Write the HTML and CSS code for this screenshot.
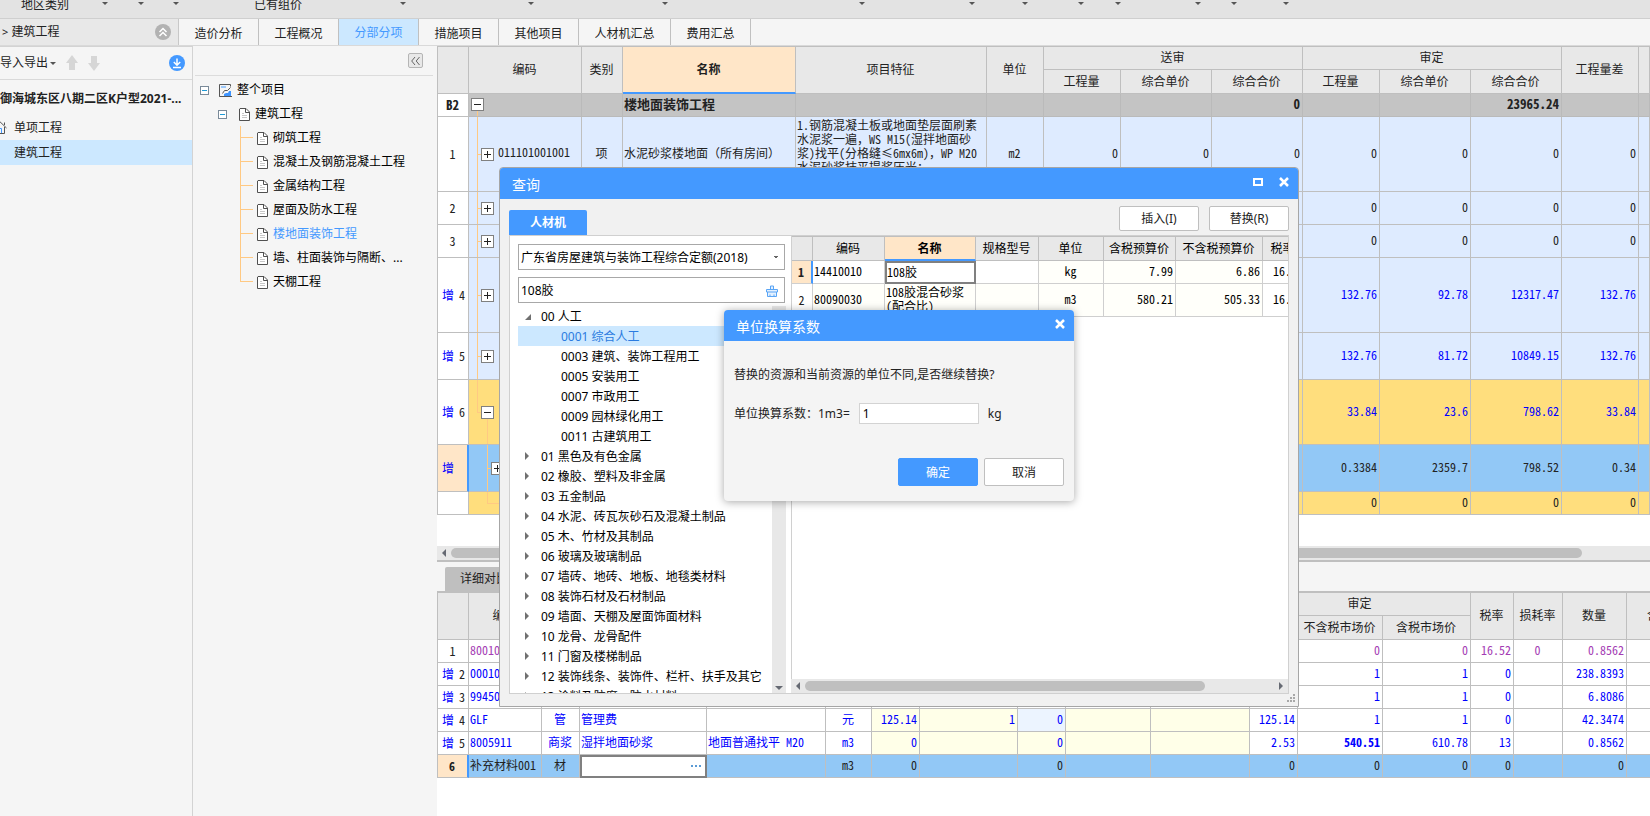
FILE: index.html
```html
<!DOCTYPE html>
<html lang="zh-CN">
<head>
<meta charset="utf-8">
<title>分部分项</title>
<link rel="stylesheet" href="styles.css">
</head>
<body>
<svg class="defs" aria-hidden="true">
  <symbol id="doc" viewBox="0 0 11 13"><path d="M1 .5h6L10.500 4v8.500H.5V1z" fill="#fff" stroke="#505050"/><path d="M6.500 1v3.500H10" fill="none" stroke="#505050"/><path d="M3 5.500h2M3 7.500h5M3 9.500h5" stroke="#c8c8c8"/></symbol>
  <symbol id="cross" viewBox="0 0 10 10"><path d="M1 1l8 8M9 1L1 9" stroke="#fff" stroke-width="2.500" fill="none"/></symbol>
</svg>

<header class="ribbon">
  <div class="rb rb-first"><span>地区类别</span><i class="caret"></i></div>
  <div class="rb"><i class="caret"></i></div>
  <div class="rb"><i class="caret"></i></div>
  <div class="rb rb-price"><span>已有组价</span><i class="caret"></i></div>
  <div class="rb"><i class="caret"></i></div>
  <div class="rb"><i class="caret"></i></div>
  <div class="rb"><i class="caret"></i></div>
  <div class="rb"><i class="caret"></i></div>
  <div class="rb"><i class="caret"></i></div>
  <div class="rb"><i class="caret"></i></div>
  <div class="rb"><i class="caret"></i></div>
  <div class="rb"><i class="caret"></i></div>
  <div class="rb"><i class="caret"></i></div>
  <div class="rb"><i class="caret"></i></div>
</header>

<nav class="tabbar">
  <div class="crumb"><span><small>&gt;</small> 建筑工程</span>
    <button class="plain" aria-label="收起"><svg width="16" height="16" viewBox="0 0 16 16"><circle cx="8" cy="8" r="8" fill="#b2b2b2"/><path d="M4.500 8L8 4.500 11.500 8M4.500 12L8 8.500l3.500 3.500" fill="none" stroke="#fff" stroke-width="1.500"/></svg></button>
  </div>
  <button class="tab">造价分析</button>
  <button class="tab">工程概况</button>
  <button class="tab tab-on">分部分项</button>
  <button class="tab">措施项目</button>
  <button class="tab">其他项目</button>
  <button class="tab tab-wide">人材机汇总</button>
  <button class="tab">费用汇总</button>
</nav>

<main class="work">
  <aside class="projects">
    <div class="tools">
      <button class="plain import">导入导出<i class="caret"></i></button>
      <button class="plain" aria-label="上移"><svg width="12" height="16" viewBox="0 0 12 16"><path d="M6 0l6 8H9v7H3V8H0z" fill="#d6d6d6"/></svg></button>
      <button class="plain" aria-label="下移"><svg width="12" height="16" viewBox="0 0 12 16"><path d="M6 16l6-8H9V1H3v7H0z" fill="#d6d6d6"/></svg></button>
      <button class="plain down" aria-label="下载"><svg width="16" height="16" viewBox="0 0 16 16"><circle cx="8" cy="8" r="8" fill="#4499ff"/><path d="M8 3.500V10M4.800 7L8 10.200 11.200 7M4 12.500h8" fill="none" stroke="#fff" stroke-width="1.500"/></svg></button>
    </div>
    <h1 class="project-name">御海城东区八期二区K户型2021-...</h1>
    <ul class="plist">
      <li><svg width="14" height="13" viewBox="0 0 14 13"><path d="M.5 7L7 .8 13.500 7M2.500 6v6.500h9V6M11.500 4V1.500" fill="none" stroke="#555"/><path d="M5.500 12V7.500h3V12" fill="none" stroke="#4499ff"/></svg>单项工程</li>
      <li class="picked">建筑工程</li>
    </ul>
  </aside>

  <aside class="outline">
    <div class="outline-head"><button class="fold" aria-label="折叠"><svg width="9" height="8" viewBox="0 0 9 8"><path d="M4 0L.7 4 4 8M8.500 0L5.200 4l3.300 4" fill="none" stroke="#666"/></svg></button></div>
    <ul class="tree">
      <li class="t0"><i class="mini"></i><svg width="13" height="13" viewBox="0 0 13 13"><path d="M4.500 12.500H.5V.5h11v2M.5 12.500H13" fill="none" stroke="#555"/><path d="M2 2h5v2H2z" fill="#9cc8fa"/><path d="M3.500 9.500l2-3h3l3-3" fill="none" stroke="#555"/><path d="M5 12v-2l2-1h2l1-2h2v5z" fill="#3f95ff"/></svg>整个项目</li>
      <li class="t1"><i class="mini"></i><svg width="11" height="13"><use href="#doc"/></svg>建筑工程</li>
      <li class="t2"><svg width="11" height="13"><use href="#doc"/></svg>砌筑工程</li>
      <li class="t2"><svg width="11" height="13"><use href="#doc"/></svg>混凝土及钢筋混凝土工程</li>
      <li class="t2"><svg width="11" height="13"><use href="#doc"/></svg>金属结构工程</li>
      <li class="t2"><svg width="11" height="13"><use href="#doc"/></svg>屋面及防水工程</li>
      <li class="t2 here"><svg width="11" height="13"><use href="#doc"/></svg>楼地面装饰工程</li>
      <li class="t2"><svg width="11" height="13"><use href="#doc"/></svg>墙、柱面装饰与隔断、...</li>
      <li class="t2 last"><svg width="11" height="13"><use href="#doc"/></svg>天棚工程</li>
    </ul>
  </aside>

  <section class="sheets">
    <div class="sheet">
      <table class="grid main-grid">
        <colgroup><col class="w31"><col class="w113"><col class="w41"><col class="w173"><col class="w191"><col class="w57"><col class="w77"><col class="w91"><col class="w91"><col class="w77"><col class="w91"><col class="w91"><col class="w77"><col></colgroup>
        <thead>
          <tr class="h23"><th rowspan="2"></th><th rowspan="2">编码</th><th rowspan="2">类别</th><th rowspan="2" class="hot">名称</th><th rowspan="2">项目特征</th><th rowspan="2">单位</th><th colspan="3">送审</th><th colspan="3">审定</th><th rowspan="2">工程量差</th><th rowspan="2"></th></tr>
          <tr class="h24"><th>工程量</th><th>综合单价</th><th>综合合价</th><th>工程量</th><th>综合单价</th><th>综合合价</th></tr>
        </thead>
        <tbody>
          <tr class="h23 sum"><td class="no">B2</td><td class="node n-top"><i class="box minus"></i></td><td></td><td>楼地面装饰工程</td><td></td><td></td><td></td><td></td><td class="r">0</td><td></td><td></td><td class="r">23965.24</td><td></td><td></td></tr>
          <tr class="h75 blue"><td class="no">1</td><td class="node n1"><i class="box"></i>011101001001</td><td class="c">项</td><td>水泥砂浆楼地面（所有房间）</td><td class="memo">1.钢筋混凝土板或地面垫层面刷素<br>水泥浆一遍，WS M15(湿拌地面砂<br>浆)找平(分格缝≤6mx6m)，WP M20<br>水泥砂浆抹平提浆压光；</td><td class="c">m2</td><td class="r">0</td><td class="r">0</td><td class="r">0</td><td class="r">0</td><td class="r">0</td><td class="r">0</td><td class="r">0</td><td></td></tr>
          <tr class="h33 blue"><td class="no">2</td><td class="node n1"><i class="box"></i></td><td></td><td></td><td></td><td></td><td></td><td></td><td></td><td class="r">0</td><td class="r">0</td><td class="r">0</td><td class="r">0</td><td></td></tr>
          <tr class="h33 blue"><td class="no">3</td><td class="node n1"><i class="box"></i></td><td></td><td></td><td></td><td></td><td></td><td></td><td></td><td class="r">0</td><td class="r">0</td><td class="r">0</td><td class="r">0</td><td></td></tr>
          <tr class="h75 blue new"><td class="no add"><b>增</b>4</td><td class="node n1"><i class="box"></i></td><td></td><td></td><td></td><td></td><td></td><td></td><td></td><td class="r">132.76</td><td class="r">92.78</td><td class="r">12317.47</td><td class="r">132.76</td><td></td></tr>
          <tr class="h47 blue new"><td class="no add"><b>增</b>5</td><td class="node n1"><i class="box"></i></td><td></td><td></td><td></td><td></td><td></td><td></td><td></td><td class="r">132.76</td><td class="r">81.72</td><td class="r">10849.15</td><td class="r">132.76</td><td></td></tr>
          <tr class="h65 gold new"><td class="no add"><b>增</b>6</td><td class="node n1 n-open"><i class="box minus"></i></td><td></td><td></td><td></td><td></td><td></td><td></td><td></td><td class="r">33.84</td><td class="r">23.6</td><td class="r">798.62</td><td class="r">33.84</td><td></td></tr>
          <tr class="h47 sel"><td class="no add cur"><b>增</b></td><td class="node n2"><i class="box"></i></td><td></td><td></td><td></td><td></td><td></td><td></td><td></td><td class="r">0.3384</td><td class="r">2359.7</td><td class="r">798.52</td><td class="r">0.34</td><td></td></tr>
          <tr class="h23 gold"><td class="no"></td><td class="node n-end"></td><td></td><td></td><td></td><td></td><td></td><td></td><td></td><td class="r">0</td><td class="r">0</td><td class="r">0</td><td class="r">0</td><td></td></tr>
        </tbody>
      </table>
    </div>
    <div class="hbar"><i class="arr left"></i><i class="thumb thumb-main"></i></div>
    <div class="detail">
      <div class="detail-tabs"><button class="dtab">详细对比</button></div>
      <table class="grid detail-grid">
        <colgroup><col class="w31"><col class="w73"><col class="w38"><col class="w127"><col class="w119"><col class="w46"><col class="w48"><col class="w98"><col class="w48"><col class="w85"><col class="w99"><col class="w48"><col class="w85"><col class="w88"><col class="w43"><col class="w49"><col class="w64"><col class="w90"></colgroup>
        <thead>
          <tr class="h23"><th rowspan="2"></th><th rowspan="2">编码</th><th rowspan="2"></th><th rowspan="2"></th><th rowspan="2"></th><th rowspan="2"></th><th colspan="5"></th><th colspan="3">审定</th><th rowspan="2">税率</th><th rowspan="2">损耗率</th><th rowspan="2">数量</th><th rowspan="2">含税合价</th></tr>
          <tr class="h24"><th></th><th></th><th></th><th></th><th></th><th></th><th>不含税市场价</th><th>含税市场价</th></tr>
        </thead>
        <tbody>
          <tr class="h23 old"><td class="no">1</td><td>80010680</td><td></td><td></td><td></td><td></td><td></td><td></td><td></td><td></td><td></td><td></td><td class="r">0</td><td class="r">0</td><td class="r">16.52</td><td class="c">0</td><td class="r">0.8562</td><td></td></tr>
          <tr class="h23 new"><td class="no add"><b>增</b>2</td><td>00010010</td><td></td><td></td><td></td><td></td><td></td><td></td><td></td><td></td><td></td><td></td><td class="r">1</td><td class="r">1</td><td class="r">0</td><td></td><td class="r">238.8393</td><td></td></tr>
          <tr class="h23 new"><td class="no add"><b>增</b>3</td><td>99450760</td><td></td><td></td><td></td><td></td><td></td><td></td><td></td><td></td><td></td><td></td><td class="r">1</td><td class="r">1</td><td class="r">0</td><td></td><td class="r">6.8086</td><td></td></tr>
          <tr class="h23 new"><td class="no add"><b>增</b>4</td><td>GLF</td><td class="c">管</td><td>管理费</td><td></td><td class="c">元</td><td class="r y">125.14</td><td class="r y">1</td><td class="r pale">0</td><td class="y"></td><td class="y"></td><td class="r">125.14</td><td class="r">1</td><td class="r">1</td><td class="r">0</td><td></td><td class="r">42.3474</td><td></td></tr>
          <tr class="h23 new"><td class="no add"><b>增</b>5</td><td>8005911</td><td class="c">商浆</td><td>湿拌地面砂浆</td><td>地面普通找平 M20</td><td class="c">m3</td><td class="r y">0</td><td class="y"></td><td class="r y">0</td><td class="y"></td><td class="y"></td><td class="r">2.53</td><td class="r strong">540.51</td><td class="r">610.78</td><td class="r">13</td><td></td><td class="r">0.8562</td><td></td></tr>
          <tr class="h23 sel"><td class="no cur">6</td><td>补充材料001</td><td class="c">材</td><td class="edit"><button class="more" aria-label="选择"><svg width="11" height="2" viewBox="0 0 11 2"><path d="M0 0h2v2H0zM4 0h2v2H4zM8 0h2v2H8z" fill="#5b9bd5"/></svg></button></td><td></td><td class="c">m3</td><td class="r">0</td><td></td><td class="r">0</td><td></td><td></td><td class="r">0</td><td class="r">0</td><td class="r">0</td><td class="r">0</td><td></td><td class="r">0</td><td></td></tr>
        </tbody>
      </table>
    </div>
  </section>
</main>

<section class="dialog" role="dialog" aria-labelledby="q-title">
  <header class="dlg-title"><h2 id="q-title">查询</h2>
    <button class="plain" aria-label="最大化"><svg width="10" height="8" viewBox="0 0 10 8"><path d="M1 1h8v6H1z" fill="none" stroke="#fff" stroke-width="2"/></svg></button>
    <button class="plain" aria-label="关闭"><svg width="10" height="10"><use href="#cross"/></svg></button>
  </header>
  <div class="dlg-bar"><button class="dlg-tab">人材机</button><span class="grow"></span><button class="btn">插入(I)</button><button class="btn">替换(R)</button></div>
  <div class="dlg-body">
    <div class="finder">
      <select class="field" aria-label="定额库"><option>广东省房屋建筑与装饰工程综合定额(2018)</option></select>
      <div class="field search"><input type="text" value="108胶" aria-label="搜索"><svg width="12" height="12" viewBox="0 0 12 12"><path d="M4.500 4V1h3v3M.5 7V4.500h11V7M1.500 7v4.500h9V7M.5 7h11M4 11V9.500M8 11V9.500" fill="#e4f1ff" stroke="#5aa5f5"/></svg></div>
      <div class="listwrap">
        <ul class="list">
          <li class="open">00 人工</li>
          <li class="leaf on">0001 综合人工</li>
          <li class="leaf">0003 建筑、装饰工程用工</li>
          <li class="leaf">0005 安装用工</li>
          <li class="leaf">0007 市政用工</li>
          <li class="leaf">0009 园林绿化用工</li>
          <li class="leaf">0011 古建筑用工</li>
          <li class="shut">01 黑色及有色金属</li>
          <li class="shut">02 橡胶、塑料及非金属</li>
          <li class="shut">03 五金制品</li>
          <li class="shut">04 水泥、砖瓦灰砂石及混凝土制品</li>
          <li class="shut">05 木、竹材及其制品</li>
          <li class="shut">06 玻璃及玻璃制品</li>
          <li class="shut">07 墙砖、地砖、地板、地毯类材料</li>
          <li class="shut">08 装饰石材及石材制品</li>
          <li class="shut">09 墙面、天棚及屋面饰面材料</li>
          <li class="shut">10 龙骨、龙骨配件</li>
          <li class="shut">11 门窗及楼梯制品</li>
          <li class="shut">12 装饰线条、装饰件、栏杆、扶手及其它</li>
          <li class="shut">13 涂料及防腐、防水材料</li>
        </ul>
        <div class="vbar"><i class="arr up"></i><i class="arr dn"></i></div>
      </div>
    </div>
    <div class="results">
      <div class="results-view">
        <table class="grid result-grid">
          <colgroup><col class="w21"><col class="w72"><col class="w91"><col class="w63"><col class="w65"><col class="w72"><col class="w87"><col class="w41"></colgroup>
          <thead><tr class="h24"><th></th><th>编码</th><th class="hot">名称</th><th>规格型号</th><th>单位</th><th>含税预算价</th><th>不含税预算价</th><th>税率</th></tr></thead>
          <tbody>
            <tr class="h23"><td class="no cur">1</td><td>14410010</td><td class="edit">108胶</td><td></td><td class="c cream">kg</td><td class="r cream">7.99</td><td class="r cream">6.86</td><td class="rate">16.52</td></tr>
            <tr class="h33"><td class="no">2</td><td class="cream">80090030</td><td class="cream">108胶混合砂浆<br>(配合比)</td><td class="cream"></td><td class="c cream">m3</td><td class="r cream">580.21</td><td class="r cream">505.33</td><td class="rate">16.52</td></tr>
          </tbody>
        </table>
      </div>
      <div class="hbar"><i class="arr left"></i><i class="thumb"></i><span class="rest"></span><i class="arr right"></i></div>
    </div>
  </div>
  <svg class="grip" width="8" height="8" viewBox="0 0 8 8"><path d="M6 0h2v2H6zM6 3h2v2H6zM3 3h2v2H3zM6 6h2v2H6zM3 6h2v2H3zM0 6h2v2H0z" fill="#a8a8a8"/></svg>
</section>

<section class="dialog modal" role="dialog" aria-labelledby="m-title">
  <header class="dlg-title"><h2 id="m-title">单位换算系数</h2>
    <button class="plain" aria-label="关闭"><svg width="10" height="10"><use href="#cross"/></svg></button>
  </header>
  <div class="modal-body">
    <p>替换的资源和当前资源的单位不同,是否继续替换?</p>
    <div class="factor"><label for="factor">单位换算系数：1m3=</label><input id="factor" type="text" value="1"><span>kg</span></div>
    <div class="actions"><button class="btn ok">确定</button><button class="btn">取消</button></div>
  </div>
</section>
</body>
</html>
```
FILE: styles.css
```css
* { box-sizing: border-box; }
html, body { height: 100%; }
body {
  margin: 0;
  display: flex;
  flex-direction: column;
  overflow: hidden;
  background: #f5f5f5;
  color: #222;
  font: 12px/20px "Noto Sans", "Noto Sans CJK SC", sans-serif;
}
button, input, select { font: inherit; color: inherit; margin: 0; }
button { padding: 0; border: 0; background: none; }
ul, h1, h2, p { margin: 0; padding: 0; list-style: none; }
svg { display: block; flex: none; }
.defs { position: absolute; width: 0; height: 0; }
.plain { display: flex; align-items: center; }
.grow { flex: 1; }
.caret { flex: none; width: 0; height: 0; border: 3px solid transparent; border-top-color: #555; border-bottom: 0; }

/* ribbon */
.ribbon {
  flex: none;
  height: 19px;
  display: grid;
  grid-template-columns: 108px 36px 35px 227px 128px 134px 197px 110px 53px 56px 37px 80px 36px 52px;
  background: #e3e3e3;
  border-bottom: 1px solid #cfcfcf;
}
.rb { display: flex; align-items: flex-start; justify-content: flex-end; line-height: 10px; }
.rb span { margin-right: auto; }
.rb .caret { margin-top: 2px; }
.rb-first { padding-left: 21px; }
.rb-price { padding-left: 75px; }

/* page tabs */
.tabbar { flex: none; height: 27px; display: flex; border-bottom: 1px solid #d9d9d9; }
.crumb {
  width: 179px;
  display: flex;
  align-items: center;
  justify-content: space-between;
  padding: 0 7px 0 2px;
  background: #e8e8e8;
  border-right: 1px solid #c8c8c8;
}
.crumb small { font-size: 11px; }
.tab { width: 80px; padding-top: 3px; border-right: 1px solid #c0c0c0; }
.tab-wide { width: 92px; }
.tab-on { background: #cce8ff; color: #4499ff; padding-top: 1px; }

.work { flex: 1; min-height: 0; display: flex; }

/* project list */
.projects { flex: none; width: 193px; border-right: 1px solid #d3d3d3; border-top: 1px solid #d3d3d3; overflow: hidden; }
.tools { height: 33px; display: flex; align-items: center; gap: 10px; padding-right: 7px; border-bottom: 1px solid #d9d9d9; }
.import { gap: 2px; }
.down { margin-left: auto; }
.project-name { font-size: 12px; line-height: 20px; padding: 9px 0 6px; font-weight: 700; white-space: nowrap; }
.plist li { height: 25px; display: flex; align-items: center; padding-left: 14px; }
.plist svg { margin-left: -21px; margin-right: 7px; }
.plist .picked { background: #cce8ff; }

/* outline tree */
.outline { flex: none; width: 244px; padding: 0 4px 0 2px; color: #000; }
.outline-head { height: 30px; display: flex; justify-content: flex-end; align-items: center; padding-right: 10px; border-bottom: 1px solid #dcdcdc; }
.fold { width: 15px; height: 15px; display: flex; align-items: center; justify-content: center; border: 1px solid #b5b5b5; border-radius: 2px; background: #e8e8e8; }
.tree { padding-top: 2px; }
.tree li { height: 24px; display: flex; align-items: center; gap: 5px; white-space: nowrap; }
.mini { flex: none; width: 9px; height: 9px; border: 1px solid #7a8a99; background: linear-gradient(#1e9bd7, #1e9bd7) center / 5px 1px no-repeat #fff; }
.t0 { padding-left: 5px; }
.t0 .mini { margin-right: 5px; }
.t1 { padding-left: 23px; }
.t1 .mini { margin-right: 7px; }
.t2 { padding-left: 62px; background: linear-gradient(#ffc983, #ffc983) 45px 0 / 1px 100% no-repeat, linear-gradient(#ffc983, #ffc983) 45px 11px / 13px 1px no-repeat; }
.t2.last { background-size: 1px 12px, 13px 1px; }
.here { color: #4499ff; }

/* data grids */
.sheets { flex: 1; min-width: 0; display: flex; flex-direction: column; background: #fff; }
.sheet { flex: 1; min-height: 0; overflow: hidden; }
.grid {
  width: 100%;
  table-layout: fixed;
  border-collapse: separate;
  border-spacing: 0;
  border-left: 1px solid #bfbfbf;
  border-top: 1px solid #bfbfbf;
  font: 12px/14px "Noto Sans Mono CJK SC", "Noto Sans CJK SC", "Liberation Mono", monospace;
}
.grid th, .grid td { padding: 0 2px 2px 1px; border: solid #bfbfbf; border-width: 0 1px 1px 0; white-space: nowrap; overflow: hidden; text-align: left; }
.grid th { background: #e8e8e8; font-weight: 400; text-align: center; padding: 0 1px 2px 0; }
.grid .hot { background: #ffe6c8; font-weight: 700; border-bottom: 2px solid #4499ff; padding-bottom: 1px; }
.grid .r { text-align: right; }
.grid .c { text-align: center; }
.grid .no { text-align: center; background: #fff; color: #222; font-weight: 400; padding-bottom: 0; }
.grid .add { text-align: left; padding-left: 4px; }
.add b { color: #0000ff; font-weight: 400; margin-right: 5px; }
.grid .cur { background: #ffe6c8; border-right: 2px solid #4499ff; font-weight: 700; }
.w21 { width: 21px; } .w31 { width: 31px; } .w38 { width: 38px; } .w41 { width: 41px; } .w43 { width: 43px; }
.w46 { width: 46px; } .w48 { width: 48px; } .w49 { width: 49px; } .w57 { width: 57px; } .w63 { width: 63px; }
.w64 { width: 64px; } .w65 { width: 65px; } .w72 { width: 72px; } .w73 { width: 73px; } .w77 { width: 77px; }
.w85 { width: 85px; } .w87 { width: 87px; } .w88 { width: 88px; } .w90 { width: 90px; } .w91 { width: 91px; }
.w98 { width: 98px; } .w99 { width: 99px; } .w113 { width: 113px; } .w119 { width: 119px; } .w127 { width: 127px; }
.w173 { width: 173px; } .w191 { width: 191px; }
.h23 { height: 23px; } .h24 { height: 24px; } .h33 { height: 33px; } .h47 { height: 47px; } .h65 { height: 65px; } .h75 { height: 75px; }
.sum { background: #c4c4c4; font-weight: 700; }
.sum td { border-color: #bababa; font-size: 13px; }
.grid .sum .no { border-color: #bfbfbf; font-weight: 700; }
.blue { background: #deebff; }
.gold { background: #ffde7d; }
.sel { background: #92c8f6; }
.new { color: #0000ff; }
.old { color: #a43cb4; }
.y { background: #ffffe8; }
.pale { background: #ecf4ff; }
.cream { background: #fffffa; }
.strong { font-weight: 700; }
.grid .memo { vertical-align: top; padding-top: 1px; }
.grid .edit { background: #fff; border: 2px solid #808080; padding-left: 0; }
.more { display: flex; justify-content: flex-end; width: 100%; padding-right: 1px; }

/* tree lines inside the code column */
.grid .node { --l: linear-gradient(#ffc983, #ffc983); background-repeat: no-repeat; }
.box { display: inline-block; vertical-align: middle; width: 13px; height: 13px; margin: 0 4px 0 0; border: 1px solid #808080;
  background: linear-gradient(#222, #222) center / 7px 1px no-repeat, linear-gradient(#222, #222) center / 1px 7px no-repeat #fff; }
.box.minus { background: linear-gradient(#222, #222) center / 7px 1px no-repeat #fff; }
.grid .n-top { padding-left: 2px; background-image: var(--l); background-position: 8px 100%; background-size: 1px 5px; }
.grid .n1 { padding-left: 12px; background-image: var(--l), var(--l); background-position: 8px 0, 8px 50%; background-size: 1px 100%, 5px 1px; }
.grid .n-open { background-image: var(--l), var(--l), var(--l); background-position: 8px 0, 8px 50%, 18px 100%; background-size: 1px 50%, 5px 1px, 1px 50%; }
.grid .n2 { padding-left: 22px; background-image: var(--l), var(--l); background-position: 18px 0, 18px 50%; background-size: 1px 100%, 5px 1px; }
.grid .n-end { background-image: var(--l), var(--l); background-position: 18px 0, 18px 50%; background-size: 1px 50%, 40px 1px; }

/* scroll bars */
.hbar { flex: none; height: 14px; display: flex; align-items: center; padding: 0 5px; gap: 5px; background: #e8e8e8; }
.arr { flex: none; width: 0; height: 0; border: 4px solid transparent; }
.arr.left { border-right-color: #666a73; border-left: 0; }
.arr.right { border-left-color: #666a73; border-right: 0; }
.arr.up { border-bottom-color: #666a73; border-top: 0; }
.arr.dn { border-top-color: #666a73; border-bottom: 0; }
.thumb { flex: 401; height: 10px; border-radius: 5px; background: #bfbfbf; }
.rest { flex: 64; }
.thumb-main { flex: none; width: 94%; }

/* lower pane */
.detail { flex: none; height: 256px; overflow: hidden; border-top: 2px solid #bfbfbf; }
.detail-tabs { height: 29px; display: flex; align-items: flex-end; padding-left: 8px; background: #f5f5f5; }
.dtab { height: 24px; padding: 0 15px; background: #bfbfbf; border-radius: 2px 2px 0 0; }
.detail-grid { border-top-width: 2px; }

/* query window */
.dialog { position: absolute; left: 499px; top: 167px; width: 800px; height: 540px; display: flex; flex-direction: column; background: #f1f1f1; border: 1px solid #a6a6a6; border-radius: 4px 4px 0 0; overflow: hidden; }
.dlg-title { flex: none; height: 31px; display: flex; align-items: center; gap: 16px; padding: 0 9px 3px 12px; background: #4499ff; color: #fff; }
.dlg-title h2 { flex: 1; font-size: 14px; line-height: 20px; font-weight: 400; padding-top: 6px; }
.dlg-bar { flex: none; height: 36px; display: flex; align-items: center; gap: 10px; padding: 2px 9px 0; }
.dlg-tab { align-self: flex-end; width: 78px; height: 25px; background: #4499ff; color: #fff; font-weight: 700; border-radius: 2px 2px 0 0; }
.btn { width: 80px; height: 25px; padding-top: 1px; line-height: 22px; background: #fff; border: 1px solid #bfbfbf; border-radius: 2px; }
.dlg-body { flex: 1; min-height: 0; display: flex; margin: 0 9px 12px; border: 1px solid #d0d0d0; background: #fff; }
.finder { flex: none; width: 281px; display: flex; flex-direction: column; padding: 8px 5px 0 8px; color: #000; }
.field { flex: none; width: 267px; height: 26px; margin-bottom: 7px; border: 1px solid #a8a8a8; border-radius: 0; background: #fff; padding: 1px 2px 0; }
select.field { appearance: none; background: linear-gradient(to bottom left, #666 50%, transparent 50%) calc(100% - 8px) 11px / 3px 3px no-repeat, linear-gradient(to bottom right, #666 50%, transparent 50%) calc(100% - 5px) 11px / 3px 3px no-repeat #fff; }
.search { display: flex; align-items: center; padding-right: 6px; }
.search input { flex: 1; min-width: 0; border: 0; outline: 0; padding: 0; background: none; }
.listwrap { flex: 1; min-height: 0; display: flex; margin-top: -4px; overflow: hidden; }
.list { flex: 1; }
.list li { height: 20px; padding-top: 2px; display: flex; align-items: center; white-space: nowrap; }
.list .leaf { padding-left: 43px; }
.list .on { background: #cce8ff; color: #2a7be0; }
.open::before { content: ""; margin: 0 10px 0 7px; border: 3px solid #707070; border-top-color: transparent; border-left-color: transparent; }
.shut::before { content: ""; margin: 0 12px 2px 7px; border: 4px solid transparent; border-left-color: #707070; border-right: 0; }
.vbar { flex: none; width: 14px; display: flex; flex-direction: column; align-items: center; justify-content: space-between; padding: 4px 0 3px; background: #e8e8e8; }
.results { flex: 1; min-width: 0; display: flex; flex-direction: column; }
.results-view { flex: 1; min-height: 0; overflow: hidden; border-left: 1px solid #d0d0d0; }
.result-grid { color: #000; border-left: 0; }
.result-grid td { border-color: #cfcfcf; }
.grid .rate { padding-left: 10px; }
.grip { position: absolute; right: 3px; bottom: 4px; }

/* factor window */
.modal { left: 724px; top: 310px; width: 350px; height: 191px; background: #f4f4f4; border: 0; border-radius: 4px; box-shadow: 0 1px 8px rgba(0, 0, 0, .35); }
.modal-body { flex: 1; display: flex; flex-direction: column; padding: 24px 10px 15px; }
.factor { display: flex; align-items: center; gap: 9px; margin-top: 18px; }
.factor input { width: 120px; height: 21px; padding: 0 3px; border: 1px solid #d3d3d3; background: #fff; color: #000; }
.actions { display: flex; justify-content: flex-end; gap: 6px; margin-top: auto; }
.actions .btn { height: 28px; }
.btn.ok { background: #4499ff; border-color: #4499ff; color: #fff; }
```
